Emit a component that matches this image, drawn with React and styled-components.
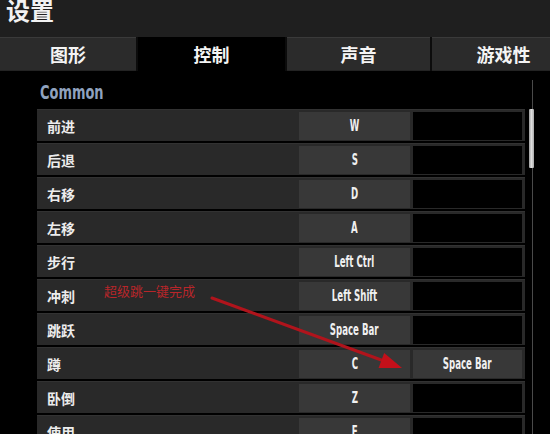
import React from 'react';
import styled, { createGlobalStyle } from 'styled-components';

const Global = createGlobalStyle`
  html, body { margin: 0; padding: 0; background: #000; }
  body {
    width: 550px; height: 434px; overflow: hidden;
    font-family: "Noto Sans CJK SC", "Noto Sans", sans-serif;
  }
`;

const Page = styled.div`
  position: relative;
  width: 550px;
  height: 434px;
  overflow: hidden;
  background: #000;
  display: flex;
  flex-direction: column;
`;

const Header = styled.header`
  flex: none;
  height: 37px;
  box-sizing: border-box;
  padding-left: 6px;
  background: #1f1f1f;
  overflow: hidden;
`;

const Title = styled.h1`
  margin: -2px 0 0;
  font-size: 24px;
  line-height: 1;
  font-weight: 700;
  color: #f2f2f2;
`;

const Tabs = styled.nav`
  flex: none;
  display: flex;
  gap: 2px;
  height: 34px;
  background: #0c0c0c;
  overflow: hidden;
`;

const Tab = styled.div`
  flex: none;
  width: ${p => p.$w}px;
  box-sizing: border-box;
  display: flex;
  align-items: center;
  justify-content: center;
  font-size: 18px;
  font-weight: 700;
  color: #f4f4f4;
  background: ${p => (p.$active ? '#000' : '#2b2b2b')};
  border-top: 1px solid ${p => (p.$active ? '#000' : '#3a3a3a')};
  border-bottom: 1px solid ${p => (p.$active ? '#000' : '#232323')};
`;

const Body = styled.section`
  flex: 1;
  display: flex;
  padding-left: 37px;
  min-height: 0;
`;

const ListCol = styled.div`
  width: 488px;
  flex: none;
  display: flex;
  flex-direction: column;
`;

const GroupTitle = styled.h2`
  flex: none;
  margin: 0;
  height: 38px;
  box-sizing: border-box;
  padding: 4px 0 0 3px;
  display: flex;
  align-items: center;
  font-family: "Liberation Sans Narrow", "DejaVu Sans Condensed", "Liberation Sans", sans-serif;
  font-size: 20px;
  font-weight: 700;
  color: #8fa2bf;
`;

const Narrow = styled.span`
  display: inline-block;
  transform: scaleX(${p => p.$sx || 0.64});
  transform-origin: ${p => p.$origin || 'center'};
  white-space: nowrap;
`;

const Rows = styled.div`
  flex: none;
  display: flex;
  flex-direction: column;
  gap: 2px;
`;

const Row = styled.div`
  height: 32px;
  flex: none;
  box-sizing: border-box;
  display: flex;
  align-items: center;
  padding: 0 3px 0 10px;
  background: #292929;
  border-top: 1px solid #323232;
`;

const Label = styled.div`
  flex: 1;
  font-size: 14px;
  font-weight: 700;
  color: #ececec;
`;

const KeyCell = styled.div`
  flex: none;
  width: ${p => p.$w}px;
  height: 28px;
  margin-left: ${p => p.$gap || 0}px;
  box-sizing: border-box;
  display: flex;
  align-items: center;
  justify-content: center;
  background: ${p => (p.$empty ? '#000' : '#383838')};
  font-family: "Liberation Sans Narrow", "DejaVu Sans Condensed", "Liberation Sans", sans-serif;
  font-size: 15px;
  font-weight: 700;
  color: #f0f0f0;
`;

const ScrollCol = styled.div`
  flex: none;
  width: 6px;
  margin-left: 4px;
  padding-top: 9px;
  display: flex;
  justify-content: center;
`;

const Track = styled.div`
  position: relative;
  width: 1px;
  height: 100%;
  background: #4a4a4a;
`;

const Thumb = styled.div`
  position: absolute;
  left: -3px;
  top: 29px;
  width: 5px;
  height: 59px;
  border-radius: 1px;
  background: linear-gradient(90deg, #9c9c9c, #dedede 50%, #a8a8a8);
`;

const Note = styled.div`
  position: absolute;
  left: 104px;
  top: 281px;
  font-size: 13px;
  color: #b8262a;
`;

const ArrowSvg = styled.svg`
  position: absolute;
  left: 0;
  top: 0;
  pointer-events: none;
`;

const rows = [
  ['前进', 'W', ''],
  ['后退', 'S', ''],
  ['右移', 'D', ''],
  ['左移', 'A', ''],
  ['步行', 'Left Ctrl', ''],
  ['冲刺', 'Left Shift', ''],
  ['跳跃', 'Space Bar', ''],
  ['蹲', 'C', 'Space Bar'],
  ['卧倒', 'Z', ''],
  ['使用', 'F', ''],
];

const tabs = [
  { t: '图形', w: 136 },
  { t: '控制', w: 147, active: true },
  { t: '声音', w: 143 },
  { t: '游戏性', w: 143 },
];

export default function App() {
  return (
    <Page>
      <Global />
      <Header>
        <Title>设置</Title>
      </Header>
      <Tabs>
        {tabs.map(tab => (
          <Tab key={tab.t} $w={tab.w} $active={tab.active}>{tab.t}</Tab>
        ))}
      </Tabs>
      <Body>
        <ListCol>
          <GroupTitle><Narrow $sx={0.72} $origin="left">Common</Narrow></GroupTitle>
          <Rows>
            {rows.map(([label, k1, k2]) => (
              <Row key={label}>
                <Label>{label}</Label>
                <KeyCell $w={111}><Narrow>{k1}</Narrow></KeyCell>
                <KeyCell $w={109} $gap={3} $empty={!k2}>{k2 && <Narrow>{k2}</Narrow>}</KeyCell>
              </Row>
            ))}
          </Rows>
        </ListCol>
        <ScrollCol>
          <Track><Thumb /></Track>
        </ScrollCol>
      </Body>
      <Note>超级跳一键完成</Note>
      <ArrowSvg width="550" height="434" viewBox="0 0 550 434">
        <line x1="212" y1="298" x2="384" y2="361" stroke="#b0141c" strokeWidth="3" strokeLinecap="round" />
        <polygon points="402,368 378.6,367.9 384.2,352.9" fill="#c4101a" />
      </ArrowSvg>
    </Page>
  );
}
